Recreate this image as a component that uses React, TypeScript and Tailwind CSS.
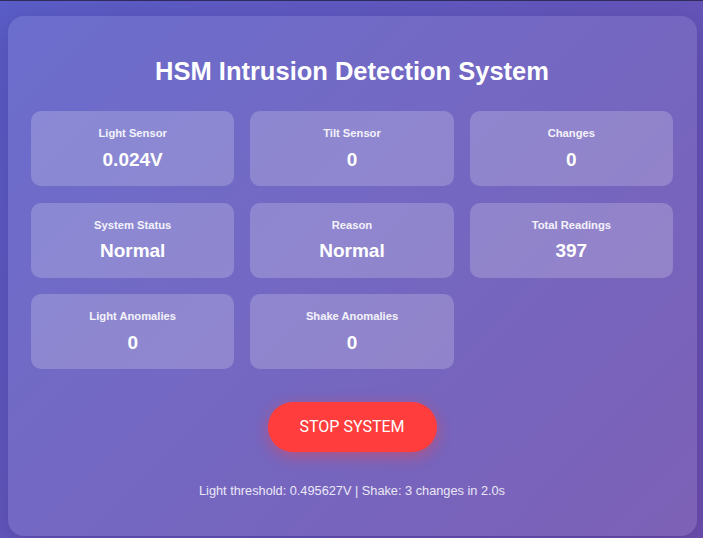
import React from "react";

const cards: { label: string; value: string }[] = [
  { label: "Light Sensor", value: "0.024V" },
  { label: "Tilt Sensor", value: "0" },
  { label: "Changes", value: "0" },
  { label: "System Status", value: "Normal" },
  { label: "Reason", value: "Normal" },
  { label: "Total Readings", value: "397" },
  { label: "Light Anomalies", value: "0" },
  { label: "Shake Anomalies", value: "0" },
];

export default function App() {
  return (
    <div
      className="w-[703px] h-[538px] overflow-hidden bg-[linear-gradient(135deg,#5b5ec8_0%,#6e4fae_100%)]"
      style={{ fontFamily: '"Liberation Sans", Arial, sans-serif' }}
    >
      <div className="h-px bg-[#2f2d5c]" />
      <div className="ml-[8px] mt-[15px] w-[689px] h-[520px] rounded-[16px] bg-white/10 shadow-[0_8px_32px_rgba(30,20,90,0.25)] pt-[40px] pl-[23px] pr-[24px] flex flex-col">
        <h1 className="text-center text-white font-bold text-[25.5px] leading-[30px] mb-[25px]">
          HSM Intrusion Detection System
        </h1>
        <div className="grid grid-cols-3 gap-x-[16px] gap-y-[16.5px]">
          {cards.map((c) => (
            <div
              key={c.label}
              className="h-[75px] rounded-[10px] bg-white/20 flex flex-col items-center justify-center"
            >
              <div className="text-white/90 font-bold text-[11.2px] leading-[14px] mb-[7.5px]">
                {c.label}
              </div>
              <div className="text-white font-bold text-[19px] leading-[23px]">
                {c.value}
              </div>
            </div>
          ))}
        </div>
        <div className="flex justify-center mt-[33px]">
          <button
            className="h-[50px] px-[32px] rounded-full bg-[#ff3d3d] text-white text-[16px] leading-[20px] shadow-[0_4px_15px_rgba(255,59,59,0.45)]"
            style={{ fontFamily: 'Roboto, "Liberation Sans", sans-serif' }}
          >
            STOP SYSTEM
          </button>
        </div>
        <p className="mt-[31px] text-center text-white/85 text-[12.75px] leading-[15px]">
          Light threshold: 0.495627V | Shake: 3 changes in 2.0s
        </p>
      </div>
    </div>
  );
}
